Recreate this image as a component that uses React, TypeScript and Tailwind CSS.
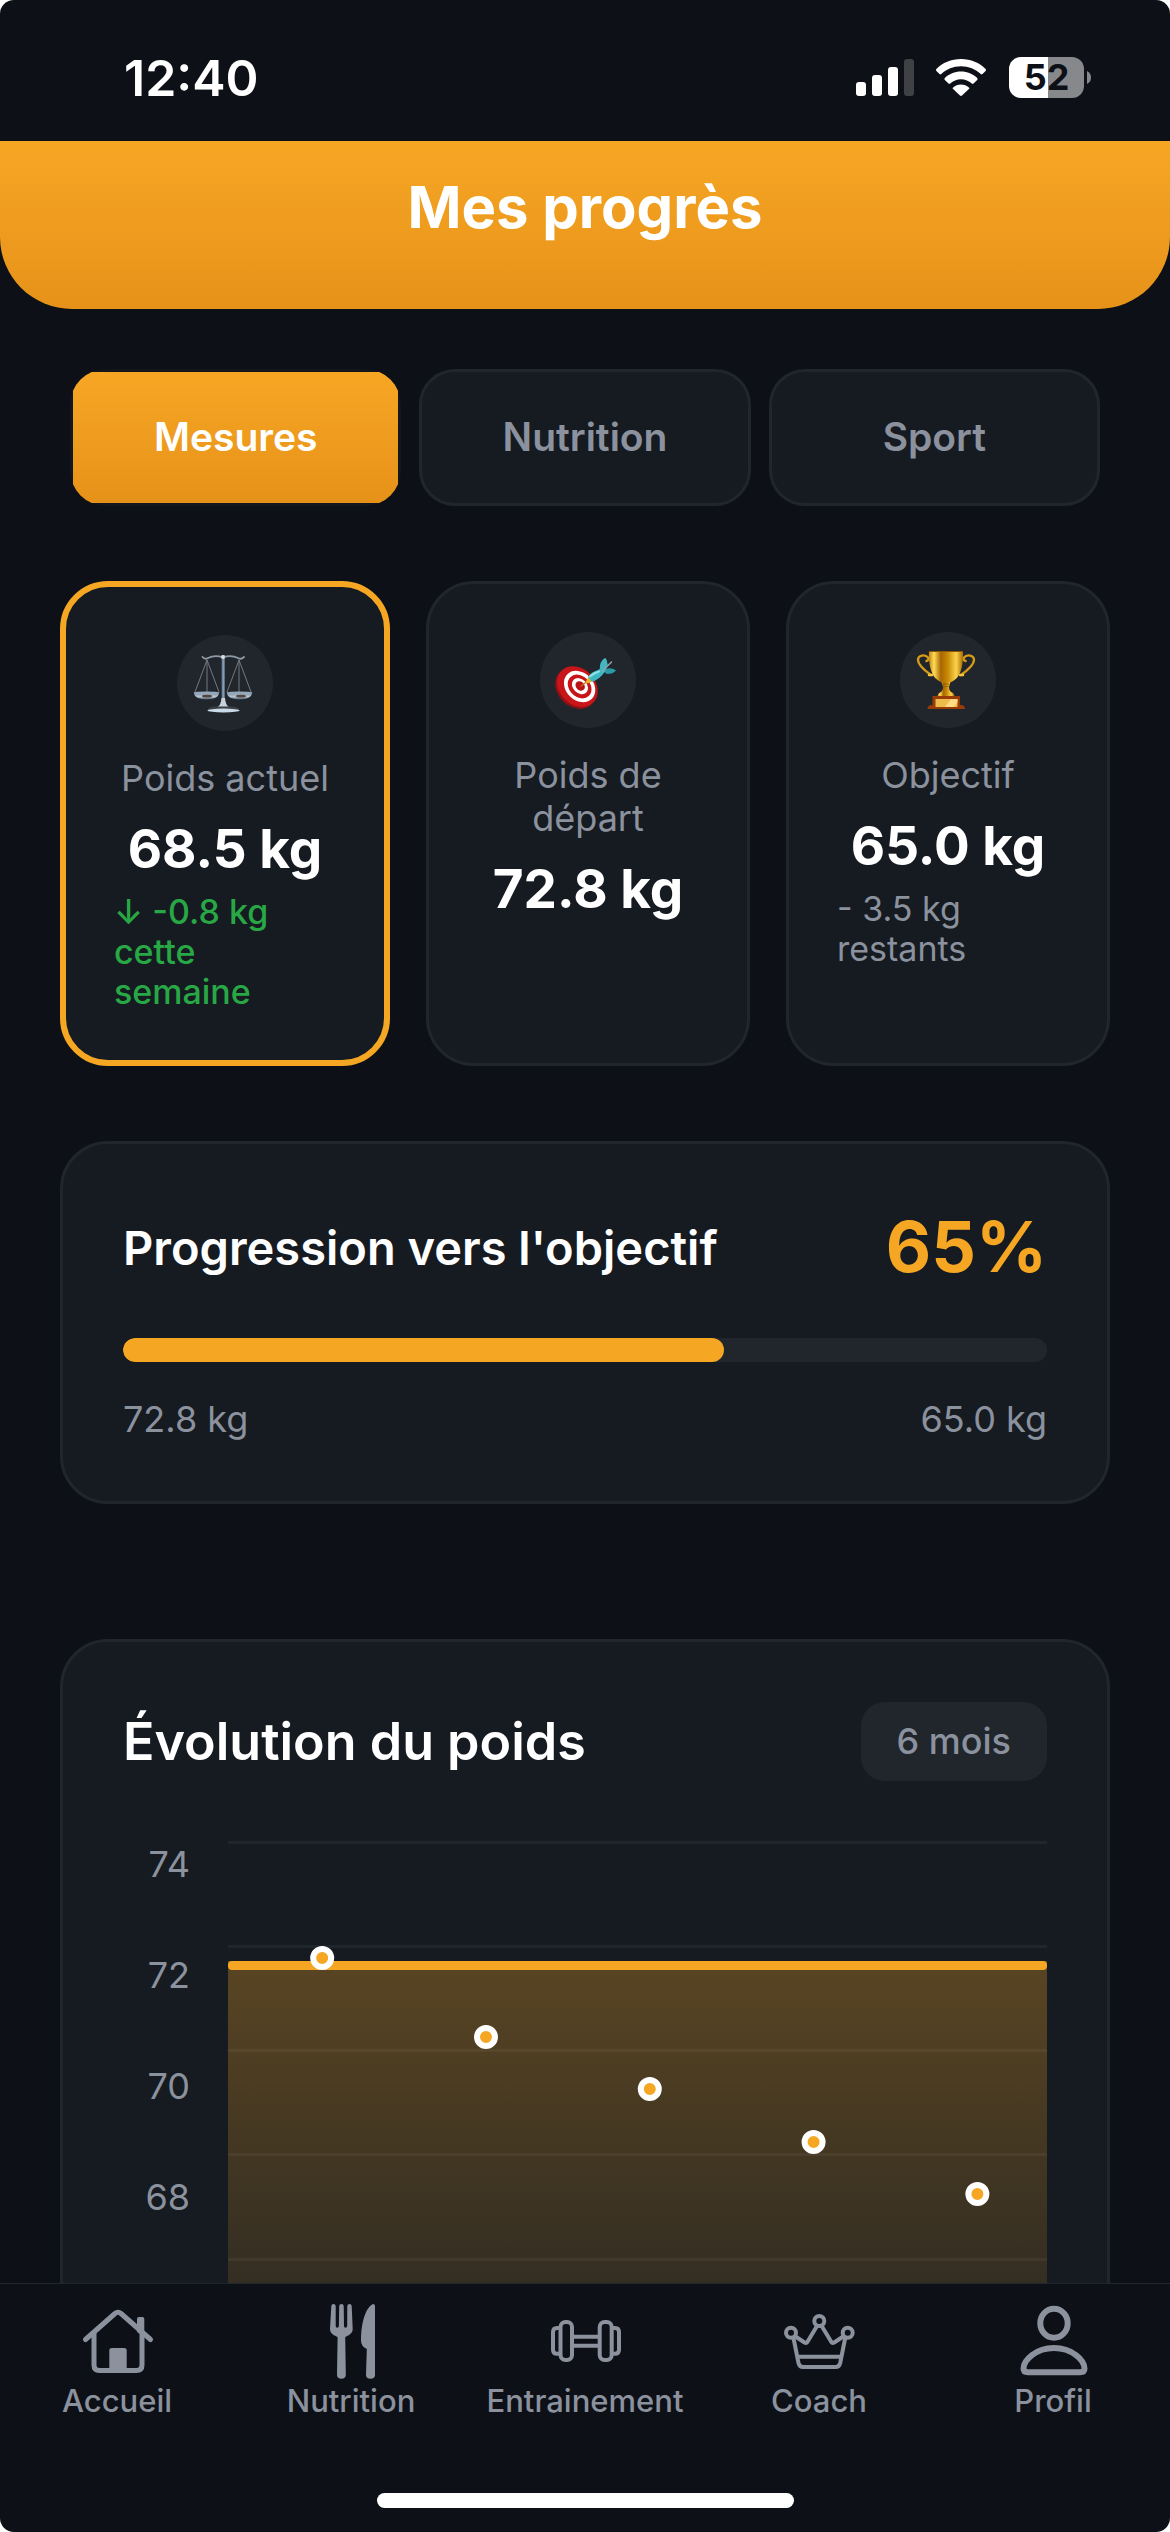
import type { ReactNode } from "react";

function StatusBar() {
  return (
    <div className="flex h-[141px] shrink-0 items-start justify-between pt-[57px] pr-[79px] pl-[124px]">
      <time className="text-[50px] leading-[42px] font-semibold text-white">12:40</time>
      <div className="flex h-[41px] items-center">
        <svg className="mr-[22px] h-[37px] w-[58px]" viewBox="0 0 58 37" aria-label="Réseau">
          <rect x="0" y="23" width="10" height="14" rx="3" fill="#fff" />
          <rect x="16" y="16" width="10" height="21" rx="3" fill="#fff" />
          <rect x="32" y="8" width="10" height="29" rx="3" fill="#fff" />
          <rect x="48" y="0" width="10" height="37" rx="3" fill="#3f4145" />
        </svg>
        <svg className="mr-[23px] h-[37px] w-[50px]" viewBox="0 0 50 37" fill="#fff" aria-label="Wi-Fi">
          <path d="M25 0C34.800 0 43.600 3.800 49.600 10Q50.400 11 49.600 11.900L46.500 15Q45.600 15.900 44.700 15C39.500 10 32.700 7.200 25 7.200S10.500 10 5.300 15Q4.400 15.900 3.500 15L.4 11.900Q-.4 11 .4 10C6.400 3.800 15.200 0 25 0Z" />
          <path d="M25 12.600C31.300 12.600 37 15.100 41.200 19.100Q42 20 41.200 20.900L37.500 24.500Q36.700 25.300 35.800 24.500C32.900 21.900 29.200 20.300 25 20.300S17.100 21.900 14.200 24.500Q13.300 25.300 12.500 24.500L8.800 20.900Q8 20 8.800 19.100C13 15.100 18.700 12.600 25 12.600Z" />
          <path d="M25 25.500C28 25.500 30.800 26.600 32.900 28.400Q33.800 29.200 32.900 30.100L26 36.600Q25 37.400 24 36.600L17.100 30.100Q16.200 29.200 17.100 28.400C19.200 26.600 22 25.500 25 25.500Z" />
        </svg>
        <div className="flex h-[41px] w-[75px] items-center justify-center rounded-[12px] bg-linear-to-r from-white from-52% to-[#87888b] to-52% text-[36px] leading-[41px] font-bold text-[#0d1117]">
          52
        </div>
        <svg className="ml-[3px] h-[13px] w-[4px]" viewBox="0 0 4 13">
          <path d="M0 0Q4 2 4 6.500T0 13Z" fill="#87888b" />
        </svg>
      </div>
    </div>
  );
}

function ScaleIcon() {
  return (
    <svg className="size-[96px]" viewBox="0 0 96 96" fill="none">
      <defs>
        <linearGradient id="steel" x1="0" y1="0" x2="1" y2="0">
          <stop offset="0" stopColor="#4b6076" />
          <stop offset=".5" stopColor="#8fa6bb" />
          <stop offset="1" stopColor="#4a5b6d" />
        </linearGradient>
        <linearGradient id="pan" x1="0" y1="0" x2="0" y2="1">
          <stop offset="0" stopColor="#75899c" />
          <stop offset=".6" stopColor="#b9c6d2" />
          <stop offset="1" stopColor="#46566a" />
        </linearGradient>
      </defs>
      <g stroke="#73797f" strokeWidth="1">
        <path d="M30 25L18 57M30 25V57M30 25L42 57" />
        <path d="M62 25L50 57M62 25V57M62 25L74 57" />
      </g>
      <path d="M25.500 22Q28 25 31 23Q38 19.500 46 22.500Q54 19.500 61 23Q64 25 67 22" stroke="#8f99a3" strokeWidth="1.800" strokeLinecap="round" />
      <rect x="44.500" y="20" width="3.500" height="48" fill="url(#steel)" />
      <circle cx="46" cy="22" r="2" fill="#d5dee6" />
      <path d="M44.500 63H48Q48.500 70 52 72H40.500Q44 70 44.500 63Z" fill="#c8d2dc" />
      <path d="M30.500 76Q31 71.500 38 71.500H55Q62 71.500 63 76Z" fill="#3a3f45" />
      <ellipse cx="46.500" cy="75.500" rx="16" ry="1.900" fill="#c9dbe8" />
      <path d="M16.500 57.500H42.500Q41 64.500 29.500 64.500T16.500 57.500Z" fill="url(#pan)" />
      <path d="M49.500 57.500H75.500Q74 64.500 62.500 64.500T49.500 57.500Z" fill="url(#pan)" />
      <ellipse cx="29.500" cy="58" rx="12.500" ry="1.600" fill="#96a9bb" />
      <ellipse cx="62.500" cy="58" rx="12.500" ry="1.600" fill="#96a9bb" />
      <ellipse cx="30" cy="61.200" rx="5" ry="1.400" fill="#54463f" />
      <ellipse cx="64" cy="61.200" rx="5" ry="1.400" fill="#54463f" />
    </svg>
  );
}

function TargetIcon() {
  return (
    <svg className="size-[96px]" viewBox="0 0 96 96" fill="none">
      <g transform="rotate(45 37 55)">
        <ellipse cx="37" cy="57.500" rx="22.500" ry="17.500" fill="#8f1013" />
        <ellipse cx="37" cy="54.500" rx="22.500" ry="18" fill="#c81519" />
        <ellipse cx="38.500" cy="52.800" rx="17.300" ry="13.800" fill="#fff" />
        <ellipse cx="38.500" cy="52.800" rx="13.200" ry="10.400" fill="#c81519" />
        <ellipse cx="38.500" cy="52.300" rx="9" ry="7" fill="#fff" />
        <ellipse cx="38.500" cy="52" rx="5.200" ry="4.200" fill="#b91316" />
      </g>
      <path d="M41 54L49 48" stroke="#c8741c" strokeWidth="1.300" strokeLinecap="round" />
      <path d="M45.500 50L48.500 45L52 49.500L47.500 51.500Z" fill="#e8b51f" />
      <path d="M60 38C59 32 62 27 65.500 26Q68 29 67 34L64 40Z" fill="#46b5bf" />
      <path d="M63 39C67 35 72 36 76 38.500Q73 42 67 42Z" fill="#2b98a5" />
      <path d="M48 45Q51 40 58 38L68 31.500L65 39.500Q60 47 52 50Z" fill="#3fb7c2" />
      <path d="M50 44.500Q54 41 59 39.500" stroke="#8be3e8" strokeWidth="2" strokeLinecap="round" />
      <path d="M62 39.500L71.500 30" stroke="#8ea6ac" strokeWidth="1.400" strokeLinecap="round" />
    </svg>
  );
}

function TrophyIcon() {
  return (
    <svg className="size-[96px]" viewBox="0 0 96 96" fill="none">
      <defs>
        <linearGradient id="gold" x1="0" y1="0" x2="1" y2="0">
          <stop offset="0" stopColor="#c98508" />
          <stop offset=".15" stopColor="#ffdc5a" />
          <stop offset=".35" stopColor="#a86600" />
          <stop offset=".55" stopColor="#c98a06" />
          <stop offset=".8" stopColor="#fbd34b" />
          <stop offset="1" stopColor="#a86a00" />
        </linearGradient>
      </defs>
      <path d="M31 43C24 38 18 33 18 28C18 23 25 22 28 25.500Q29.500 28 26.500 29" stroke="#d69b17" strokeWidth="2.400" strokeLinecap="round" />
      <path d="M61 43C68 38 74 33 74 28C74 23 67 22 64 25.500Q62.500 28 65.500 29" stroke="#d69b17" strokeWidth="2.400" strokeLinecap="round" />
      <path d="M29 43H32M60 43H63" stroke="#f3c33c" strokeWidth="2.500" strokeLinecap="round" />
      <path d="M29 19H63C63.500 33 61 48 49 50.500H43C31 48 28.500 33 29 19Z" fill="url(#gold)" />
      <path d="M29 19.500H63" stroke="#8e5a02" strokeWidth="1" />
      <path d="M41.500 50H50.500L49.500 53Q48 57 51 60Q54.500 61 54.500 65H37.500Q37.500 61 41 60Q44 57 42.500 53Z" fill="url(#gold)" />
      <path d="M43 52H49M43.500 54.500H48.500" stroke="#8e5a02" strokeWidth=".8" />
      <path d="M32.500 64H60V73H62Q65 74 65 77H27.500Q27.500 74 30.500 73H32.500Z" fill="#983b07" />
      <rect x="35.500" y="67" width="22" height="8" fill="#eebb4d" />
      <path d="M45 75L51 67H57.500V70L54 75Z" fill="#ffdc84" />
    </svg>
  );
}

type StatCardProps = {
  icon: ReactNode;
  label: string;
  value: string;
  note?: string[];
  active?: boolean;
};

function StatCard({ icon, label, value, note, active }: StatCardProps) {
  return (
    <article
      className={
        active
          ? "flex flex-1 flex-col items-center rounded-[48px] border-6 border-[#f5a623] bg-[#161b22] p-12"
          : "flex flex-1 flex-col items-center rounded-[48px] border-3 border-[#21262d] bg-[#161b22] p-12"
      }
    >
      <div className="size-[96px] rounded-full bg-[#21262d]">{icon}</div>
      <h2 className="mt-[26px] text-center text-[36px] leading-[43px] text-[#8b929e]">{label}</h2>
      <p className="mt-[18px] text-[53px] leading-[62px] font-bold whitespace-nowrap text-white">{value}</p>
      {note && (
        <p
          className={
            active
              ? "mt-3 w-full text-[34px] leading-[40px] font-medium text-[#28a745]"
              : "mt-3 w-full text-[34px] leading-[40px] text-[#8b929e]"
          }
        >
          {note.map((line) => (
            <span key={line} className="block whitespace-nowrap">
              {line}
            </span>
          ))}
        </p>
      )}
    </article>
  );
}

function ProgressCard() {
  return (
    <section className="mt-[75px] rounded-[48px] border-3 border-[#21262d] bg-[#161b22] p-[60px]">
      <div className="flex items-center justify-between">
        <h2 className="text-[47px] leading-[57px] font-semibold text-white">Progression vers l'objectif</h2>
        <span className="text-[70px] leading-[86px] font-bold text-[#f5a623]">65%</span>
      </div>
      <div
        className="mt-[48px] h-6 overflow-hidden rounded-full bg-[#21262d]"
        role="progressbar"
        aria-label="Progression vers l'objectif"
        aria-valuenow={65}
        aria-valuemin={0}
        aria-valuemax={100}
      >
        <div className="h-full w-[65%] rounded-full bg-[#f5a623]" />
      </div>
      <div className="mt-[36px] flex justify-between text-[36px] leading-[43px] text-[#8b929e]">
        <span>72.8 kg</span>
        <span>65.0 kg</span>
      </div>
    </section>
  );
}

const gridLines = [2, 106, 210, 314, 419, 523];
const points = [
  { x: "11.5%", y: 117 },
  { x: "31.5%", y: 196 },
  { x: "51.5%", y: 248 },
  { x: "71.5%", y: 301 },
  { x: "91.5%", y: 353 },
];

function ChartCard() {
  return (
    <section className="mt-[135px] shrink-0 rounded-[48px] border-3 border-[#21262d] bg-[#161b22] p-[60px]">
      <div className="flex items-center justify-between">
        <h2 className="text-[52px] leading-[64px] font-semibold text-white">Évolution du poids</h2>
        <button type="button" className="rounded-[24px] bg-[#21262d] px-9 py-[18px] text-[36px] leading-[43px] font-medium text-[#8b929e]">
          6 mois
        </button>
      </div>
      <div className="mt-[60px] flex">
        <div className="flex w-[105px] shrink-0 flex-col gap-[68px] pt-[2px] pr-[38px] text-right text-[36px] leading-[43px] text-[#8b929e]">
          {[74, 72, 70, 68].map((tick) => (
            <span key={tick}>{tick}</span>
          ))}
        </div>
        <svg className="h-[600px] min-w-0 flex-1" role="img" aria-label="Courbe du poids sur 6 mois">
          <defs>
            <linearGradient id="area" x1="0" y1="0" x2="0" y2="1">
              <stop offset="0" stopColor="#f5a623" stopOpacity=".3" />
              <stop offset="1" stopColor="#f5a623" stopOpacity=".05" />
            </linearGradient>
          </defs>
          {gridLines.map((y) => (
            <rect key={y} x="0" y={y - 2} width="100%" height="3" fill="#21262d" />
          ))}
          <rect x="0" y="120" width="100%" height="480" fill="url(#area)" />
          <rect x="0" y="120" width="100%" height="9" rx="4" fill="#f5a623" />
          {points.map((p) => (
            <circle key={p.x} cx={p.x} cy={p.y} r="9" fill="#f5a623" stroke="#fff" strokeWidth="6" />
          ))}
        </svg>
      </div>
    </section>
  );
}

const navItems: { label: string; icon: ReactNode }[] = [
  {
    label: "Accueil",
    icon: (
      <>
        <path d="M7.500 37.500L37 11.500Q40 9 43 11.500L72.500 37.500" fill="none" stroke="currentColor" strokeWidth="5" strokeLinecap="round" strokeLinejoin="round" />
        <path d="M16 30V63Q16 68.500 21.500 68.500H58.500Q64 68.500 64 63V30" fill="none" stroke="currentColor" strokeWidth="5" />
        <path d="M59 30V17Q59 15 61 15H64.300Q66.300 15 66.300 17V35Z" fill="currentColor" />
        <path d="M31.300 69V48.500Q31.300 46 33.800 46H46.200Q48.700 46 48.700 48.500V69Z" fill="currentColor" />
      </>
    ),
  },
  {
    label: "Nutrition",
    icon: (
      <>
        <path
          d="M19.300 4Q19.500 2 21.500 2T23.700 4V24Q23.700 25.700 25.200 25.700T26.900 24L27.200 4Q27.400 2 29.500 2T31.700 4L32 24Q32 25.700 33.500 25.700T35.200 24L35.300 4Q35.500 2 37.500 2T39.700 4L40.700 27C40.700 32 36 33.500 33.200 35L33.800 73Q33.700 76.700 29.400 76.700T25 73L25.600 35C22.800 33.500 18 32 18 27Z"
          fill="currentColor"
        />
        <path d="M61 2Q63 2 63 4V73Q63 76.700 58.500 76.700T54 73L54.800 47Q49 44 49 39C49 20 54 5 61 2Z" fill="currentColor" />
      </>
    ),
  },
  {
    label: "Entrainement",
    icon: (
      <g fill="none" stroke="currentColor" strokeWidth="4">
        <rect x="14.500" y="20" width="11.500" height="38" rx="5" />
        <rect x="53.700" y="20" width="12" height="38" rx="5" />
        <path d="M14.500 26H11Q7 26 7 30V47.700Q7 51.700 11 51.700H14.500" />
        <path d="M65.700 26H69Q73 26 73 30V47.700Q73 51.700 69 51.700H65.700" />
        <path d="M26 34.700H53.700M26 43.700H53.700" />
      </g>
    ),
  },
  {
    label: "Coach",
    icon: (
      <g fill="none" stroke="currentColor" strokeWidth="4" strokeLinejoin="round">
        <circle cx="11" cy="30.700" r="5" />
        <circle cx="39.300" cy="19" r="5" />
        <circle cx="67.700" cy="30.700" r="5" />
        <path d="M13.500 36L18.500 61Q19.500 65 23 65H55.700Q59.200 65 60.200 61L65.200 36" />
        <path d="M15.500 34.500L24.500 40.500Q26.300 41.500 27.500 39.800L37 24M41.700 24L51.200 39.800Q52.300 41.500 54.200 40.500L63.200 34.500" />
        <path d="M17 54.700H61.500" />
      </g>
    ),
  },
  {
    label: "Profil",
    icon: (
      <g fill="none" stroke="currentColor" strokeWidth="6">
        <ellipse cx="40" cy="21.300" rx="13.700" ry="14.500" />
        <path d="M40 46C58 46 70.500 58 70.500 66.500Q70.500 70.300 66 70.300H14Q9.500 70.300 9.500 66.500C9.500 58 22 46 40 46Z" />
      </g>
    ),
  },
];

export default function App() {
  return (
    <div className="h-screen bg-white">
      <div className="flex h-full flex-col overflow-hidden rounded-[14px] bg-[#0d1117] font-['Inter',sans-serif]">
        <StatusBar />
        <header className="flex h-[168px] shrink-0 justify-center rounded-b-[72px] bg-linear-to-b from-[#f7a624] to-[#e69219] pt-[30px]">
          <h1 className="text-[58px] leading-[72px] font-bold text-white">Mes progrès</h1>
        </header>

        <main className="min-h-0 flex-1 overflow-hidden px-[60px] pt-[60px]">
          <div className="grid grid-cols-3 gap-[18px] px-[10px]" role="tablist">
            <button type="button" role="tab" aria-selected="true" className="h-[137px] overflow-hidden rounded-[36px] bg-[#12161d] p-[3px] text-[39px] font-semibold text-white">
              <span className="flex h-full items-center justify-center bg-linear-to-b from-[#f7a624] to-[#e69219]">Mesures</span>
            </button>
            {["Nutrition", "Sport"].map((tab) => (
              <button key={tab} type="button" role="tab" aria-selected="false" className="h-[137px] rounded-[36px] border-3 border-[#21262d] bg-[#161b22] text-[39px] font-semibold text-[#8b929e]">
                {tab}
              </button>
            ))}
          </div>

          <div className="mt-[75px] flex min-h-[485px] gap-9">
            <StatCard active icon={<ScaleIcon />} label="Poids actuel" value="68.5 kg" note={["↓ -0.8 kg", "cette", "semaine"]} />
            <StatCard icon={<TargetIcon />} label="Poids de départ" value="72.8 kg" />
            <StatCard icon={<TrophyIcon />} label="Objectif" value="65.0 kg" note={["- 3.5 kg", "restants"]} />
          </div>

          <ProgressCard />
          <ChartCard />
        </main>

        <nav className="flex h-[249px] shrink-0 flex-col items-center justify-between border-t border-[#21262d] pt-[18px] pb-6">
          <div className="grid w-full grid-cols-5">
            {navItems.map((item) => (
              <a key={item.label} href="#" className="flex flex-col items-center text-[31px] leading-[42px] font-medium text-[#8b929e]">
                <svg className="size-[78px]" viewBox="0 0 78 78" aria-hidden="true">
                  {item.icon}
                </svg>
                {item.label}
              </a>
            ))}
          </div>
          <div className="h-[15px] w-[417px] rounded-full bg-white" />
        </nav>
      </div>
    </div>
  );
}
